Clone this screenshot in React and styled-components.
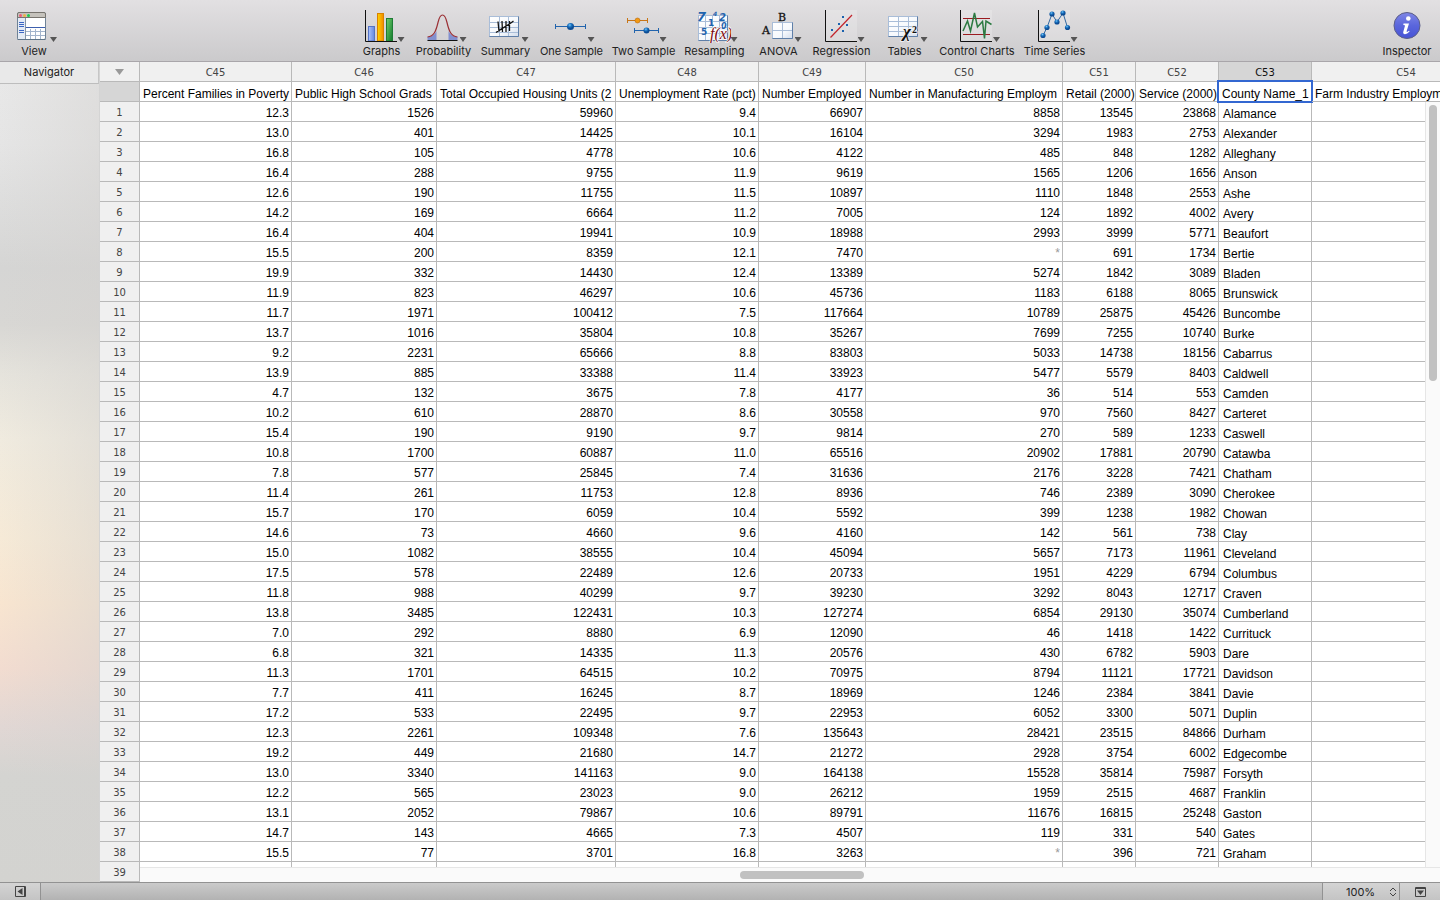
import React from "react"
import styled, { createGlobalStyle } from "styled-components"

const GlobalStyle = createGlobalStyle`
  * {
    box-sizing: border-box;
  }
  body {
    margin: 0;
    font-family: Inter, "Liberation Sans", sans-serif;
    font-size: 11px;
    color: #222;
  }
  button,
  select {
    font: inherit;
    color: inherit;
    margin: 0;
    padding: 0;
    border: 0;
    background: none;
  }
`

const Window = styled.div`
  display: flex;
  flex-direction: column;
  height: 100vh;
  overflow: hidden;
`

const Toolbar = styled.header`
  display: grid;
  grid-template-columns: 1fr auto 1fr;
  height: 62px;
  flex: none;
  padding: 0 7px;
  background: linear-gradient(#e2e0e2, #cbcacc);
  border-bottom: 1px solid #a9a6aa;
`
const ToolGroup = styled.nav`
  display: flex;
  gap: 8px;
  justify-content: ${props => props.$align || "center"};
`
const Tool = styled.button`
  display: flex;
  flex-direction: column;
  align-items: center;
  width: ${props => props.$width}px;
  padding-top: 9px;
`
const ToolIcon = styled.span`
  display: flex;
  align-items: flex-end;
  height: 34px;
  padding-left: ${props => (props.$menu ? 5 : 0)}px;
`
const Drawing = styled.svg`
  display: block;
  width: 34px;
  height: 34px;
`
const Arrow = styled.span`
  width: ${props => (props.$large ? 9 : 7)}px;
  height: ${props => (props.$large ? 6 : 5)}px;
  margin-bottom: 1px;
  background: ${props => (props.$large ? "#999" : "#555")};
  clip-path: polygon(0 0, 100% 0, 50% 100%);
`
const ToolLabel = styled.span`
  line-height: 16px;
  white-space: nowrap;
`

const Main = styled.main`
  display: flex;
  flex: 1;
  min-height: 0;
`
const Navigator = styled.aside`
  width: 100px;
  flex: none;
  border-right: 1px solid #d4d4d4;
  background: linear-gradient(
      to right,
      rgba(212, 210, 208, 0),
      rgba(212, 210, 208, 0.45)
    ),
    linear-gradient(
      #e9e9e9 0%,
      #e5e5e5 10%,
      #d5d5d4 25%,
      #d8d7d4 32%,
      #e5e3dc 38%,
      #f0ebdf 46%,
      #f6ead7 58%,
      #f8e5d0 66%,
      #f2dcd0 74%,
      #e1d7d4 81%,
      #d4d4d1 87%,
      #d3d3d0 100%
    );
`
const NavigatorTitle = styled.h2`
  height: 22px;
  margin: 0;
  border-right: 1px solid #c6c6c6;
  border-bottom: 1px solid #bdbdbd;
  background: #e9e9e9;
  font-size: 11px;
  font-weight: normal;
  line-height: 20px;
  text-align: center;
`

const Sheet = styled.section`
  position: relative;
  flex: 1;
  min-width: 0;
  overflow: hidden;
  background: #fff;
`
const Table = styled.table`
  width: 1401px;
  table-layout: fixed;
  border-collapse: separate;
  border-spacing: 0;
  font-family: "Liberation Sans", sans-serif;
  font-size: 12px;
  line-height: 14px;
  color: #000;
`
const Column = styled.col`
  width: ${props => props.$width}px;
`
const Head = styled.th`
  height: 20px;
  padding: 2px 0 0;
  border-right: 1px solid #b9b9b9;
  border-bottom: 1px solid #b9b9b9;
  background: ${props => (props.$active ? "#d6d6d6" : "#f0f0f0")};
  color: ${props => (props.$active ? "#111" : "#444")};
  font-family: "DejaVu Sans", sans-serif;
  font-size: 10px;
  font-weight: normal;
  text-align: center;
`
const CornerButton = styled.button`
  display: flex;
  align-items: center;
  justify-content: center;
  width: 100%;
  height: 17px;
`
const Cell = styled.td`
  height: 20px;
  padding: ${props => (props.$low ? "4px 2px 0 4px" : "2px 2px 0 2px")};
  border-right: 1px solid #b9b9b9;
  border-bottom: 1px solid #b9b9b9;
  color: ${props => (props.$missing ? "#999" : "#000")};
  text-align: ${props => (props.$low ? "left" : "right")};
  white-space: nowrap;
  overflow: hidden;
`
const NameCell = styled(Cell)`
  position: relative;
  padding: 4px 3px 0;
  text-align: left;
  overflow: ${props => (props.$active ? "visible" : "hidden")};

  &::after {
    content: "";
    display: ${props => (props.$active ? "block" : "none")};
    position: absolute;
    inset: -2px;
    border: 2px solid #3367d1;
  }
`

const VerticalScroll = styled.div`
  position: absolute;
  top: 40px;
  right: 0;
  bottom: 0;
  width: 15px;
  padding: 3px;
  background: #fafafa;
  border-left: 1px solid #e6e6e6;
`
const HorizontalScroll = styled.div`
  position: absolute;
  left: 40px;
  right: 0;
  bottom: 0;
  height: 15px;
  padding: 3px 0;
  background: #fafafa;
  border-top: 1px solid #e6e6e6;
`
const VerticalThumb = styled.div`
  width: 8px;
  height: 276px;
  border-radius: 4px;
  background: #c1c1c1;
`
const HorizontalThumb = styled.div`
  width: 124px;
  height: 8px;
  margin-left: 600px;
  border-radius: 4px;
  background: #c1c1c1;
`

const StatusBar = styled.footer`
  display: flex;
  flex: none;
  height: 18px;
  border-top: 1px solid #929292;
  background: linear-gradient(#cbcbcb, #b2b2b2);
`
const StatusButton = styled.button`
  display: flex;
  align-items: center;
  justify-content: center;
  width: 41px;
  background: linear-gradient(#d4d4d4, #c4c4c4);
  border-left: ${props => (props.$end ? "1px solid #929292" : "0")};
  border-right: ${props => (props.$end ? "0" : "1px solid #929292")};
`
const Zoom = styled.label`
  display: flex;
  align-items: center;
  width: 77px;
  margin-left: auto;
  padding-right: 2px;
  background: linear-gradient(#d4d4d4, #c4c4c4);
  border-left: 1px solid #929292;
`
const ZoomSelect = styled.select`
  flex: 1;
  min-width: 0;
  padding-left: 23px;
  appearance: none;
  outline: none;
`

const Axes = () => (
  <>
    <rect x="2" y="1" width="31" height="31" fill="#fff" opacity="0.2" />
    <path d="M1.5 1V32.5H33" fill="none" stroke="#111" />
  </>
)

const Grid = ({ x, y, width, height, columns, rows }) => (
  <g stroke="#a9bdd8">
    <rect x={x} y={y} width={width} height={height} fill="url(#paper)" />
    {columns.map(offset => (
      <path key={offset} d={`M${x + offset} ${y}v${height}`} />
    ))}
    {rows.map(offset => (
      <path key={offset} d={`M${x} ${y + offset}h${width}`} />
    ))}
    <path
      d={`M${x} ${y + height}h${width}v${-height}`}
      fill="none"
      stroke="#5f7fa8"
    />
  </g>
)

const Palette = styled.svg`
  display: block;
  width: 0;
  height: 0;
  flex: none;
`

const Gradients = () => (
  <Palette aria-hidden="true">
    <defs>
      <linearGradient id="paper" x2="1" y2="1">
        <stop offset="0" stopColor="#fff" />
        <stop offset="0.6" stopColor="#f6f9fd" />
        <stop offset="1" stopColor="#d3ddec" />
      </linearGradient>
      <linearGradient id="orange" x2="1">
        <stop offset="0" stopColor="#ffd400" />
        <stop offset="1" stopColor="#f08a00" />
      </linearGradient>
      <linearGradient id="green" x2="1" y2="1">
        <stop offset="0" stopColor="#6fce6c" />
        <stop offset="1" stopColor="#127a2b" />
      </linearGradient>
      <linearGradient id="blue" x2="1">
        <stop offset="0" stopColor="#a9c2ff" />
        <stop offset="1" stopColor="#6488e0" />
      </linearGradient>
      <radialGradient id="ball" cx="0.4" cy="0.3">
        <stop offset="0" stopColor="#7cc4f4" />
        <stop offset="0.5" stopColor="#1b76c4" />
        <stop offset="1" stopColor="#0d4c94" />
      </radialGradient>
      <linearGradient id="info" x2="0" y2="1">
        <stop offset="0" stopColor="#7f86e6" />
        <stop offset="0.5" stopColor="#5a66dc" />
        <stop offset="1" stopColor="#4652d6" />
      </linearGradient>
    </defs>
  </Palette>
)

const drawings = {
  view: (
    <>
      <rect x="1.5" y="3.5" width="28" height="27" rx="1.5" fill="#fff" stroke="#6e8296" />
      <path d="M1.5 8.5V5q0-1.5 1.5-1.5H28q1.5 0 1.5 1.5v3.5z" fill="#c5c2bc" stroke="#77746f" />
      <circle cx="4.5" cy="6.5" r="1.5" fill="#f05a78" />
      <circle cx="8.5" cy="6.5" r="1.5" fill="#eeb24a" />
      <circle cx="12.5" cy="6.5" r="1.5" fill="#1ecb4f" />
      <path d="M2 9h7.5v21H2z" fill="#e4ebf5" />
      <path d="M9.5 9v21" stroke="#8494a8" />
      <path d="M3 13.5h5M3 15.5h5M3 17.5h5M3 21.5h5M3 23.5h5" stroke="#3c66c4" />
      <path d="M10 18.5h19" stroke="#3d5fae" />
      <path d="M10 22.5h19M10 26.5h19M14.5 20v10M19.5 20v10M24.5 20v10" stroke="#a3b4cc" />
      <path d="M1.5 30.5h28" stroke="#5f7488" />
    </>
  ),
  graphs: (
    <>
      <rect x="4.5" y="17.5" width="6" height="14.5" fill="url(#blue)" stroke="#5674c6" />
      <rect x="13.5" y="4.5" width="6" height="27.5" fill="url(#orange)" stroke="#d98200" />
      <rect x="22.5" y="9.5" width="6" height="22.5" fill="url(#green)" stroke="#1d7c34" />
      <path d="M1.5 1V32.5H33" fill="none" stroke="#111" />
    </>
  ),
  probability: (
    <>
      <path d="M1.5 28C6 27.5 8.5 26 10.5 22V31.5H1.5zM31.5 28C27 27.5 24.5 26 22.5 22V31.5H31.5z" fill="#8290cf" />
      <path d="M1.5 31.5h30" stroke="#111" />
      <path
        d="M1.5 28C8 27.5 10 22 12 13.5 13.5 7 15 6 16.5 6s3 1 4.5 7.5C23 22 25 27.5 31.5 28"
        fill="none"
        stroke="#9b3035"
        strokeWidth="1.2"
      />
    </>
  ),
  summary: (
    <>
      <Grid x={1.5} y={7.5} width={29} height={20} columns={[10, 19]} rows={[6, 11, 16]} />
      <path d="M10 12.5l1 10M14 12l.5 11M18 12v11M21.5 12v10M8 23.5C13 20 19 17 25.5 12" fill="none" stroke="#111" strokeWidth="1.3" />
    </>
  ),
  one: (
    <>
      <path d="M1.5 17.5h30M1.5 15v5M31.5 15v5" stroke="#2264ad" />
      <circle cx="16.5" cy="17.5" r="3.5" fill="url(#ball)" />
    </>
  ),
  two: (
    <>
      <path d="M1.5 11.5h20M1.5 9v5M21.5 9v5" stroke="#c87618" />
      <circle cx="11.5" cy="11.5" r="2.5" fill="#f39a13" stroke="#b9660b" strokeWidth="0.6" />
      <path d="M8.5 21.5h24M8.5 19v5M32.5 19v5" stroke="#2264ad" />
      <circle cx="20.5" cy="21.5" r="3" fill="url(#ball)" />
    </>
  ),
  resampling: (
    <>
      <Grid x={1.5} y={6.5} width={29} height={25} columns={[7, 14, 21]} rows={[6, 12, 18]} />
      <g fill="#1f63ae" fontFamily="DejaVu Sans, sans-serif" fontWeight="bold">
        <text x="0" y="12" fontSize="13" fontStyle="italic">7</text>
        <text x="16" y="7" fontSize="6" fontStyle="italic">4</text>
        <text x="22" y="12" fontSize="10" fontStyle="italic">2</text>
        <text x="11" y="17" fontSize="9">1</text>
        <text x="24" y="20" fontSize="8" fontStyle="italic">0</text>
        <text x="4" y="26" fontSize="9">5</text>
      </g>
      <text
        x="13"
        y="30"
        fill="#7e0a10"
        stroke="#fff"
        strokeWidth="1.5"
        paintOrder="stroke"
        fontFamily="Liberation Serif, serif"
        fontStyle="italic"
        fontSize="16"
      >
        f(x)
      </text>
    </>
  ),
  anova: (
    <>
      <Grid x={11.5} y={13.5} width={20} height={16} columns={[10]} rows={[8]} />
      <g fill="#111" stroke="#111" strokeWidth="0.3" fontFamily="DejaVu Serif, serif" fontSize="11" textAnchor="middle">
        <text x="21" y="12">B</text>
        <text x="5" y="25">A</text>
      </g>
    </>
  ),
  regression: (
    <>
      <Axes />
      <path d="M6.5 28.5L28 6" stroke="#c2242c" strokeWidth="1.2" />
      <path d="M18 7h2v2h-2zM14 14h2v2h-2zM22 15h2v2h-2zM18 21h2v2h-2zM7 20h2v2H7z" fill="#1b62ae" />
    </>
  ),
  tables: (
    <>
      <Grid x={1.5} y={7.5} width={29} height={20} columns={[10, 20]} rows={[5, 10, 15]} />
      <g fill="#111" stroke="#f2f4f8" strokeWidth="1.5" paintOrder="stroke" fontFamily="Liberation Serif, serif" fontWeight="bold">
        <text x="16" y="28" fontSize="17" fontStyle="italic">χ</text>
        <text x="25" y="24" fontSize="10">2</text>
      </g>
    </>
  ),
  control: (
    <>
      <Axes />
      <path d="M4 9.5h27M4 25.5h27" stroke="#9b1c20" />
      <path
        d="M4 22L8.5 12 11.5 22 15.5 4 18.5 18 23.5 12.5 25.5 29.5 27 12 32.5 15.5"
        fill="none"
        stroke="#2c7a42"
        strokeWidth="1.5"
      />
    </>
  ),
  time: (
    <>
      <Axes />
      <path d="M6 26.5L10 18.5 15 5 20 13 26 4 30.5 18.5" fill="none" stroke="#33689f" />
      {[[6, 26.5], [10, 18.5], [15, 5], [20, 13], [26, 4], [30.5, 18.5]].map(([x, y]) => (
        <circle key={x} cx={x} cy={y} r="2.6" fill="url(#ball)" />
      ))}
    </>
  ),
  inspector: (
    <>
      <circle cx="17" cy="16.5" r="13" fill="url(#info)" stroke="#5b5e88" />
      <circle cx="18.3" cy="9.5" r="2.3" fill="#fff" />
      <path
        d="M13.5 14.5h5.5l-2.3 7.6q-.3 1.2 .8 .7l1.5-1 .6 .8q-2.5 2.6-4.6 2.6-2.3 0-1.7-2.4l1.7-6q.3-.9-1.7-.9z"
        fill="#fff"
      />
    </>
  ),
}

const tools = [
  ["graphs", "Graphs", 52],
  ["probability", "Probability", 56],
  ["summary", "Summary", 52],
  ["one", "One Sample", 64],
  ["two", "Two Sample", 64],
  ["resampling", "Resampling", 62],
  ["anova", "ANOVA", 50],
  ["regression", "Regression", 60],
  ["tables", "Tables", 50],
  ["control", "Control Charts", 79],
  ["time", "Time Series", 60],
]

const columns = [
  ["C45", "Percent Families in Poverty", 152],
  ["C46", "Public High School Grads", 145],
  ["C47", "Total Occupied Housing Units (2", 179],
  ["C48", "Unemployment Rate (pct)", 143],
  ["C49", "Number Employed", 107],
  ["C50", "Number in Manufacturing Employm", 197],
  ["C51", "Retail (2000)", 73],
  ["C52", "Service (2000)", 83],
  ["C53", "County Name_1", 93],
  ["C54", "Farm Industry Employm", 189],
]
const activeColumn = "C53"

const rows = `12.3 1526 59960 9.4 66907 8858 13545 23868 Alamance
13.0 401 14425 10.1 16104 3294 1983 2753 Alexander
16.8 105 4778 10.6 4122 485 848 1282 Alleghany
16.4 288 9755 11.9 9619 1565 1206 1656 Anson
12.6 190 11755 11.5 10897 1110 1848 2553 Ashe
14.2 169 6664 11.2 7005 124 1892 4002 Avery
16.4 404 19941 10.9 18988 2993 3999 5771 Beaufort
15.5 200 8359 12.1 7470 * 691 1734 Bertie
19.9 332 14430 12.4 13389 5274 1842 3089 Bladen
11.9 823 46297 10.6 45736 1183 6188 8065 Brunswick
11.7 1971 100412 7.5 117664 10789 25875 45426 Buncombe
13.7 1016 35804 10.8 35267 7699 7255 10740 Burke
9.2 2231 65666 8.8 83803 5033 14738 18156 Cabarrus
13.9 885 33388 11.4 33923 5477 5579 8403 Caldwell
4.7 132 3675 7.8 4177 36 514 553 Camden
10.2 610 28870 8.6 30558 970 7560 8427 Carteret
15.4 190 9190 9.7 9814 270 589 1233 Caswell
10.8 1700 60887 11.0 65516 20902 17881 20790 Catawba
7.8 577 25845 7.4 31636 2176 3228 7421 Chatham
11.4 261 11753 12.8 8936 746 2389 3090 Cherokee
15.7 170 6059 10.4 5592 399 1238 1982 Chowan
14.6 73 4660 9.6 4160 142 561 738 Clay
15.0 1082 38555 10.4 45094 5657 7173 11961 Cleveland
17.5 578 22489 12.6 20733 1951 4229 6794 Columbus
11.8 988 40299 9.7 39230 3292 8043 12717 Craven
13.8 3485 122431 10.3 127274 6854 29130 35074 Cumberland
7.0 292 8880 6.9 12090 46 1418 1422 Currituck
6.8 321 14335 11.3 20576 430 6782 5903 Dare
11.3 1701 64515 10.2 70975 8794 11121 17721 Davidson
7.7 411 16245 8.7 18969 1246 2384 3841 Davie
17.2 533 22495 9.7 22953 6052 3300 5071 Duplin
12.3 2261 109348 7.6 135643 28421 23515 84866 Durham
19.2 449 21680 14.7 21272 2928 3754 6002 Edgecombe
13.0 3340 141163 9.0 164138 15528 35814 75987 Forsyth
12.2 565 23023 9.0 26212 1959 2515 4687 Franklin
13.1 2052 79867 10.6 89791 11676 16815 25248 Gaston
14.7 143 4665 7.3 4507 119 331 540 Gates
15.5 77 3701 16.8 3263 * 396 721 Graham`
  .split("\n")
  .map(line => line.split(" "))

const ToolButton = ({ icon, label, width, menu = true }) => (
  <Tool type="button" $width={width}>
    <ToolIcon $menu={menu}>
      <Drawing viewBox="0 0 34 34" aria-hidden="true">
        {drawings[icon]}
      </Drawing>
      {menu && <Arrow />}
    </ToolIcon>
    <ToolLabel>{label}</ToolLabel>
  </Tool>
)

const Worksheet = () => (
  <Sheet>
    <Table>
      <colgroup>
        <Column $width={40} />
        {columns.map(([id, , width]) => (
          <Column key={id} $width={width} />
        ))}
      </colgroup>
      <thead>
        <tr>
          <Head>
            <CornerButton type="button" aria-label="Select all">
              <Arrow $large />
            </CornerButton>
          </Head>
          {columns.map(([id]) => (
            <Head key={id} scope="col" $active={id === activeColumn}>
              {id}
            </Head>
          ))}
        </tr>
        <tr>
          <Head $active />
          {columns.map(([id, name]) => (
            <NameCell key={id} $active={id === activeColumn}>
              {name}
            </NameCell>
          ))}
        </tr>
      </thead>
      <tbody>
        {rows.map((row, index) => (
          <tr key={index}>
            <Head scope="row">{index + 1}</Head>
            {row.map((value, i) => (
              <Cell key={i} $low={i === 8} $missing={value === "*"}>
                {value}
              </Cell>
            ))}
            <Cell />
          </tr>
        ))}
        <tr>
          <Head scope="row">{rows.length + 1}</Head>
          {columns.map(([id]) => (
            <Cell key={id} />
          ))}
        </tr>
      </tbody>
    </Table>
    <VerticalScroll>
      <VerticalThumb />
    </VerticalScroll>
    <HorizontalScroll>
      <HorizontalThumb />
    </HorizontalScroll>
  </Sheet>
)

const App = () => (
  <Window>
    <GlobalStyle />
    <Gradients />
    <Toolbar>
      <ToolGroup $align="flex-start">
        <ToolButton icon="view" label="View" width={54} />
      </ToolGroup>
      <ToolGroup>
        {tools.map(([icon, label, width]) => (
          <ToolButton key={icon} icon={icon} label={label} width={width} />
        ))}
      </ToolGroup>
      <ToolGroup $align="flex-end">
        <ToolButton icon="inspector" label="Inspector" width={52} menu={false} />
      </ToolGroup>
    </Toolbar>
    <Main>
      <Navigator>
        <NavigatorTitle>Navigator</NavigatorTitle>
      </Navigator>
      <Worksheet />
    </Main>
    <StatusBar>
      <StatusButton type="button" aria-label="Hide navigator">
        <svg width="11" height="11" viewBox="0 0 11 11">
          <path d="M.5 .5h10v10H.5z" fill="none" stroke="#444" />
          <path d="M7.5 2v7L2.5 5.500zM9 1h1v9H9z" fill="#444" />
        </svg>
      </StatusButton>
      <Zoom>
        <ZoomSelect aria-label="Zoom" defaultValue="100%">
          <option>50%</option>
          <option>100%</option>
          <option>200%</option>
        </ZoomSelect>
        <svg width="8" height="10" viewBox="0 0 8 10" aria-hidden="true">
          <path d="M1 4l3-3 3 3M1 6l3 3 3-3" fill="none" stroke="#444" />
        </svg>
      </Zoom>
      <StatusButton type="button" aria-label="Show panel" $end>
        <svg width="11" height="10" viewBox="0 0 11 10">
          <path d="M.5 .5h10v9H.5zM0 1.5h11" fill="none" stroke="#444" />
          <path d="M2 3.5h7L5.500 8z" fill="#444" />
        </svg>
      </StatusButton>
    </StatusBar>
  </Window>
)

export default App
